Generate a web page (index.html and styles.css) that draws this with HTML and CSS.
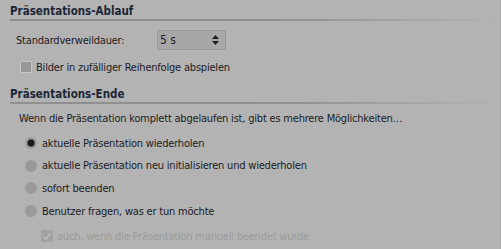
FILE: index.html
```html
<!DOCTYPE html>
<html lang="de">
<head>
<meta charset="utf-8">
<link rel="stylesheet" href="styles.css">
</head>
<body>
<div class="panel">
  <section class="group">
    <h2 class="group-title">Präsentations-Ablauf</h2>
    <div class="row-field">
      <span class="field-label">Standardverweildauer:</span>
      <div class="spin">
        <span class="spin-value">5 s</span>
        <svg class="spin-arrows" width="9" height="12" viewBox="0 0 9 12"><path d="M4.5 1 L8 5 L1 5 Z" fill="#1e1e1e"/><path d="M1 7 L8 7 L4.5 11 Z" fill="#1e1e1e"/></svg>
      </div>
    </div>
    <label class="check">
      <span class="box"></span>
      <span>Bilder in zufälliger Reihenfolge abspielen</span>
    </label>
  </section>
  <section class="group group-end">
    <h2 class="group-title">Präsentations-Ende</h2>
    <p class="intro">Wenn die Präsentation komplett abgelaufen ist, gibt es mehrere Möglichkeiten…</p>
    <ul class="radios">
      <li class="radio checked"><span class="dot"></span>aktuelle Präsentation wiederholen</li>
      <li class="radio"><span class="dot"></span>aktuelle Präsentation neu initialisieren und wiederholen</li>
      <li class="radio"><span class="dot"></span>sofort beenden</li>
      <li class="radio"><span class="dot"></span>Benutzer fragen, was er tun möchte</li>
    </ul>
    <label class="check disabled">
      <span class="box">
        <svg width="11" height="11" viewBox="0 0 11 11"><path d="M1.5 5.5 L4.3 8.5 L9.5 2" fill="none" stroke="#b9b9b9" stroke-width="2"/></svg>
      </span>
      <span>auch, wenn die Präsentation manuell beendet wurde</span>
    </label>
  </section>
</div>
</body>
</html>
```

FILE: styles.css
```css
html, body {
  margin: 0;
  padding: 0;
  background: #b3b3b3;
}
body {
  width: 501px;
  height: 249px;
  overflow: hidden;
  font-family: "DejaVu Sans Condensed", "DejaVu Sans", sans-serif;
  font-size: 11px;
  letter-spacing: -0.2px;
  color: #1c1c24;
}
.panel {
  padding: 4px 0 0 10px;
  border-right: 1px solid #a9a9a9;
  height: 245px;
  box-sizing: content-box;
  width: 490px;
}
.group-title {
  margin: 0;
  font-size: 11.5px;
  font-weight: bold;
  letter-spacing: 0;
  color: #1a2636;
  height: 15px;
  line-height: 15px;
  border-bottom: 2px solid transparent;
  border-image: linear-gradient(to right, #8f8f8f 0%, #909090 55%, #b3b3b3 100%) 1;
}
.row-field {
  display: flex;
  align-items: center;
  margin: 9px 0 0 6px;
  height: 20px;
}
.field-label {
  width: 141px;
}
.spin {
  width: 60px;
  height: 18px;
  border: 1px solid #989898;
  background: #a7a7a7;
  display: flex;
  align-items: center;
  justify-content: space-between;
  padding: 0 5px 0 2px;
  box-sizing: content-box;
}
.spin-value { font-size: 12px; letter-spacing: 0; color: #20202c; }
.spin-arrows { display: block; }
.check {
  display: flex;
  align-items: center;
  gap: 4px;
  margin: 10px 0 0 10px;
  height: 14px;
}
.box {
  width: 10px;
  height: 10px;
  border: 1px solid #c4c4c4;
  background: #979797;
  display: flex;
  align-items: center;
  justify-content: center;
}
.group-end { margin-top: 13px; }
.intro {
  margin: 7px 0 0 9px;
  height: 16px;
  line-height: 16px;
}
.radios {
  list-style: none;
  margin: 8px 0 0 15px;
  padding: 0;
  display: flex;
  flex-direction: column;
  gap: 6.7px;
}
.radio {
  display: flex;
  align-items: center;
  gap: 5px;
  height: 16px;
}
.dot {
  width: 12px;
  height: 12px;
  border-radius: 50%;
  background: #9a9a9a;
  box-sizing: border-box;
}
.radio.checked .dot {
  background: radial-gradient(circle, #1a1a1a 0 3px, #5a5a5a 3.5px, #9c9c9c 4.5px);
}
.check.disabled {
  margin: 10px 0 0 31px;
  color: #9c9c9c;
}
.check.disabled .box {
  border-color: #a3a3a3;
  background: #a3a3a3;
}
```
